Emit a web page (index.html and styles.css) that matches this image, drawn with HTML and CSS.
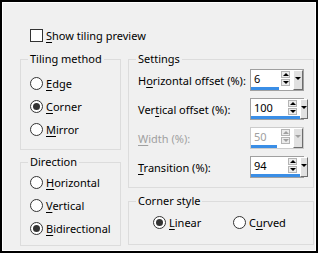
FILE: index.html
```html
<!DOCTYPE html>
<html lang="en">
  <head>
    <meta charset="UTF-8" />
    <title>Tiling options</title>
    <link rel="stylesheet" href="styles.css">
  </head>
  <body>
    <div class="dialog">
      <div class="panel">
        <div class="check-row">
          <span class="checkbox"></span>
          <span><u>S</u>how tiling preview</span>
        </div>

        <div class="columns">
          <div class="col">
            <fieldset class="group group-method">
              <legend>Tiling method</legend>
              <div class="radio-row"><span class="radio"></span><span><u>E</u>dge</span></div>
              <div class="radio-row"><span class="radio checked"></span><span><u>C</u>orner</span></div>
              <div class="radio-row"><span class="radio"></span><span><u>M</u>irror</span></div>
            </fieldset>

            <fieldset class="group group-direction">
              <legend>Direction</legend>
              <div class="radio-row"><span class="radio"></span><span><u>H</u>orizontal</span></div>
              <div class="radio-row"><span class="radio"></span><span><u>V</u>ertical</span></div>
              <div class="radio-row"><span class="radio checked"></span><span><u>B</u>idirectional</span></div>
            </fieldset>
          </div>

          <div class="col">
            <fieldset class="group group-settings">
              <legend>Settings</legend>

              <div class="field-row">
                <span class="field-label">H<u>o</u>rizontal offset (%):</span>
                <div class="num-box">
                  <div class="num-edit">
                    <div class="num-top">
                      <span class="num-value">6</span>
                      <span class="spin"><span class="spin-btn up"></span><span class="spin-btn down"></span></span>
                    </div>
                    <span class="num-bar" style="width: 28px"></span>
                  </div>
                  <span class="drop-btn"></span>
                </div>
              </div>

              <div class="field-row">
                <span class="field-label">Ver<u>t</u>ical offset (%):</span>
                <div class="num-box">
                  <div class="num-edit">
                    <div class="num-top">
                      <span class="num-value">100</span>
                      <span class="spin"><span class="spin-btn up"></span><span class="spin-btn down"></span></span>
                    </div>
                    <span class="num-bar" style="width: 49px"></span>
                  </div>
                  <span class="drop-btn"></span>
                </div>
              </div>

              <div class="field-row disabled">
                <span class="field-label"><u>W</u>idth (%):</span>
                <div class="num-box">
                  <div class="num-edit">
                    <div class="num-top">
                      <span class="num-value">50</span>
                      <span class="spin"><span class="spin-btn up"></span><span class="spin-btn down"></span></span>
                    </div>
                    <span class="num-bar" style="width: 26px"></span>
                  </div>
                  <span class="drop-btn"></span>
                </div>
              </div>

              <div class="field-row">
                <span class="field-label"><u>T</u>ransition (%):</span>
                <div class="num-box">
                  <div class="num-edit">
                    <div class="num-top">
                      <span class="num-value">94</span>
                      <span class="spin"><span class="spin-btn up"></span><span class="spin-btn down"></span></span>
                    </div>
                    <span class="num-bar" style="width: 49px"></span>
                  </div>
                  <span class="drop-btn"></span>
                </div>
              </div>
            </fieldset>

            <fieldset class="group group-corner">
              <legend>Corner style</legend>
              <div class="inline-radios">
                <div class="radio-row"><span class="radio checked"></span><span><u>L</u>inear</span></div>
                <div class="radio-row"><span class="radio"></span><span>C<u>u</u>rved</span></div>
              </div>
            </fieldset>
          </div>
        </div>
      </div>
    </div>
  </body>
</html>
```

FILE: styles.css
```css
html, body {
  margin: 0;
  background: #fff;
}

body {
  font-family: "Noto Sans", "Open Sans", sans-serif;
  font-size: 11px;
  color: #000;
}

u {
  text-decoration-thickness: 1px;
  text-underline-offset: 2px;
}

/* outer frame */
.dialog {
  width: 318px;
  height: 253px;
  box-sizing: border-box;
  border: 2px solid #000;
}

.panel {
  height: 100%;
  box-sizing: border-box;
  border: 1px solid #fff;
  background: #f0f0f0;
  padding: 25px 0 0 17px;
}

.check-row {
  display: flex;
  align-items: center;
  gap: 3px;
  height: 14px;
  margin-left: 10px;
}

.checkbox {
  width: 13px;
  height: 13px;
  box-sizing: border-box;
  border: 1px solid #333;
  background: #fff;
}

.columns {
  display: grid;
  grid-template-columns: 101px 186px;
  column-gap: 7px;
  margin-top: 10px;
}

.col {
  display: flex;
  flex-direction: column;
}

/* group boxes */
.group {
  margin: 0;
  padding: 0 0 0 9px;
  border: 1px solid #dcdcdc;
  min-width: 0;
}

.group legend {
  padding: 0 2px;
  margin-left: -2px;
  line-height: 14px;
}

.group-method {
  padding-top: 6px;
  padding-bottom: 8px;
}

.group-direction {
  margin-top: 5px;
  padding-top: 2px;
  padding-bottom: 5px;
}

.group-settings {
  padding-top: 3px;
  padding-bottom: 9px;
}

.group-corner {
  margin-top: 6px;
  padding-top: 5px;
  padding-bottom: 12px;
}

/* radios */
.radio-row {
  display: flex;
  align-items: center;
  gap: 3px;
  height: 23px;
  white-space: nowrap;
}

.radio {
  flex: none;
  width: 13px;
  height: 13px;
  box-sizing: border-box;
  border: 1px solid #333;
  border-radius: 50%;
  background: #fff;
  display: flex;
  align-items: center;
  justify-content: center;
}

.radio.checked::after {
  content: "";
  width: 7px;
  height: 7px;
  border-radius: 50%;
  background: #333;
}

.inline-radios {
  display: flex;
  margin-left: 15px;
}

.inline-radios .radio-row {
  width: 81px;
  height: 19px;
}

/* numeric fields */
.field-row {
  display: flex;
  align-items: center;
  height: 22px;
  margin-bottom: 7px;
}

.field-row:last-child {
  margin-bottom: 0;
}

.field-label {
  width: 112px;
  white-space: nowrap;
}

.num-box {
  flex: none;
  display: flex;
  width: 54px;
  height: 22px;
  box-sizing: border-box;
  border: 1px solid #a0a0a0;
  background: #fff;
}

.num-edit {
  flex: 1;
  display: flex;
  flex-direction: column;
}

.num-top {
  flex: 1;
  display: flex;
  align-items: center;
  padding: 0 3px 0 3px;
}

.num-value {
  flex: 1;
}

.spin {
  display: flex;
  flex-direction: column;
  gap: 1px;
}

.spin-btn {
  width: 9px;
  height: 7px;
  box-sizing: border-box;
  border: 1px solid #b4b4b4;
  background: #ececec;
  display: flex;
  align-items: center;
  justify-content: center;
}

.spin-btn::after {
  content: "";
  border-left: 3px solid transparent;
  border-right: 3px solid transparent;
}

.spin-btn.up::after {
  border-bottom: 3px solid #000;
}

.spin-btn.down::after {
  border-top: 3px solid #000;
}

.num-bar {
  height: 3px;
  background: #3a8ee6;
}

.drop-btn {
  width: 10px;
  box-sizing: border-box;
  border: 1px solid;
  border-color: #fff #6d6d6d #6d6d6d #fff;
  background: #e1e1e1;
  display: flex;
  justify-content: center;
  padding-top: 6px;
}

.drop-btn::after {
  content: "";
  height: 0;
  border-left: 3px solid transparent;
  border-right: 3px solid transparent;
  border-top: 3px solid #000;
}

.disabled {
  color: #a0a0a0;
}

.disabled .num-box {
  border-color: #cccccc;
}

.disabled .spin-btn.up::after {
  border-bottom-color: #a0a0a0;
}

.disabled .spin-btn.down::after,
.disabled .drop-btn::after {
  border-top-color: #a0a0a0;
}
```
